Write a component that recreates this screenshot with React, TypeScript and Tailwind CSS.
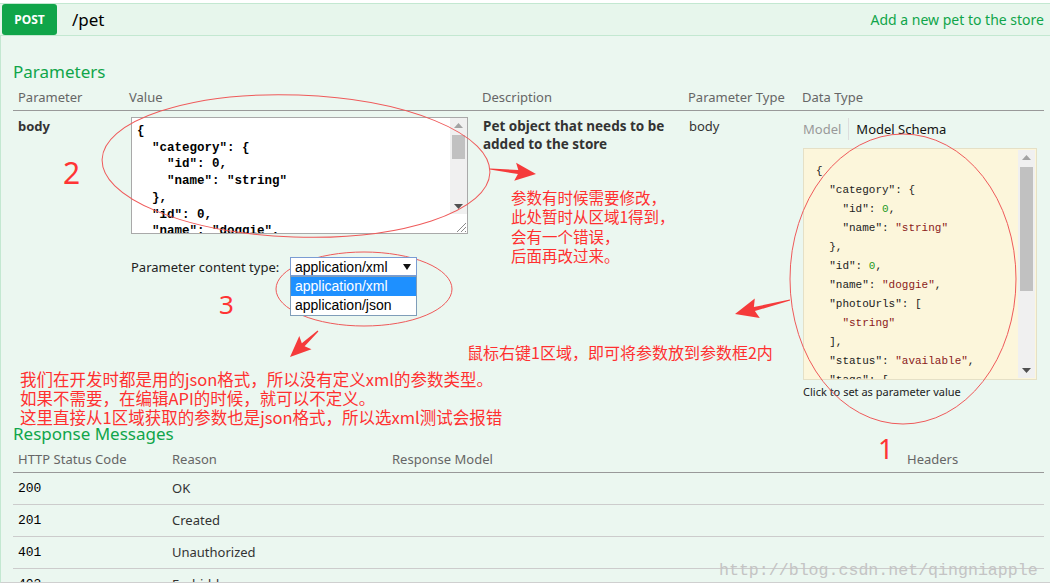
import React from "react";

function arrowPoints(tx: number, ty: number, hx: number, hy: number, headLen: number, headW: number, shaft: number) {
  const dx = hx - tx;
  const dy = hy - ty;
  const L = Math.hypot(dx, dy);
  const ux = dx / L;
  const uy = dy / L;
  const px = -uy;
  const py = ux;
  const bx = hx - ux * headLen;
  const by = hy - uy * headLen;
  const pts: [number, number][] = [
    [tx + px * 0.6, ty + py * 0.6],
    [bx + px * shaft, by + py * shaft],
    [bx - ux * 3 + px * headW / 2, by - uy * 3 + py * headW / 2],
    [hx, hy],
    [bx - ux * 3 - px * headW / 2, by - uy * 3 - py * headW / 2],
    [bx - px * shaft, by - py * shaft],
    [tx - px * 0.6, ty - py * 0.6],
  ];
  return pts.map((p) => `${p[0].toFixed(1)},${p[1].toFixed(1)}`).join(" ");
}

const textareaLines = [
  "{",
  '  "category": {',
  '    "id": 0,',
  '    "name": "string"',
  "  },",
  '  "id": 0,',
  '  "name": "doggie",',
  '  "photoUrls": [',
];

type Tok = { t: string; c?: string };
const K = "text-[#222]";
const S = "text-[#8b1a1a]";
const N = "text-[#1e9a1e]";
const schemaLines: Tok[][] = [
  [{ t: "{" }],
  [{ t: "  " }, { t: '"category"', c: K }, { t: ": {" }],
  [{ t: "    " }, { t: '"id"', c: K }, { t: ": " }, { t: "0", c: N }, { t: "," }],
  [{ t: "    " }, { t: '"name"', c: K }, { t: ": " }, { t: '"string"', c: S }],
  [{ t: "  }," }],
  [{ t: "  " }, { t: '"id"', c: K }, { t: ": " }, { t: "0", c: N }, { t: "," }],
  [{ t: "  " }, { t: '"name"', c: K }, { t: ": " }, { t: '"doggie"', c: S }, { t: "," }],
  [{ t: "  " }, { t: '"photoUrls"', c: K }, { t: ": [" }],
  [{ t: "    " }, { t: '"string"', c: S }],
  [{ t: "  ]," }],
  [{ t: "  " }, { t: '"status"', c: K }, { t: ": " }, { t: '"available"', c: S }, { t: "," }],
  [{ t: "  " }, { t: '"tags"', c: K }, { t: ": [" }],
];

const responses = [
  ["200", "OK"],
  ["201", "Created"],
  ["401", "Unauthorized"],
  ["403", "Forbidden"],
];

function UpArrow() {
  return (
    <svg width="9" height="5" viewBox="0 0 9 5">
      <polygon points="0,5 4.5,0 9,5" fill="#a3a3a3" />
    </svg>
  );
}
function DownArrow({ color = "#505050" }: { color?: string }) {
  return (
    <svg width="9" height="5" viewBox="0 0 9 5">
      <polygon points="0,0 9,0 4.5,5" fill={color} />
    </svg>
  );
}

export default function App() {
  return (
    <div className="relative w-[1050px] h-[584px] overflow-hidden bg-white font-['Noto_Sans',sans-serif]">
      <div className="pt-[3px]">
        {/* heading bar */}
        <div className="flex h-[33px] items-stretch bg-[#e7f6ec] border-y border-[#c3e8d1]">
          <div className="ml-[2px] w-[55px] bg-[#10a54a] rounded-[3px] flex items-center justify-center text-white text-[12px] font-bold">
            POST
          </div>
          <div className="ml-[15px] flex items-center text-[17px] text-black">/pet</div>
          <div className="ml-auto mr-[6px] flex items-center text-[14px] text-[#10a54a]">
            Add a new pet to the store
          </div>
        </div>

        {/* content */}
        <div className="h-[547px] bg-[#ebf7f0] border-l border-b border-l-[#c3e8d1] border-b-[#cfcfcf] pl-[12px] pr-[6px] overflow-hidden">
          <div className="mt-[26px] h-[20px] leading-[20px] text-[17px] text-[#10a54a]">Parameters</div>

          <div className="mt-[4px] grid grid-cols-[111px_353px_206px_114px_247px] h-[25px] items-center border-b border-[#999] text-[13px] text-[#666]">
            <div className="pl-[5px]">Parameter</div>
            <div className="pl-[5px]">Value</div>
            <div className="pl-[5px]">Description</div>
            <div className="pl-[5px]">Parameter Type</div>
            <div className="pl-[5px]">Data Type</div>
          </div>

          <div className="grid grid-cols-[111px_353px_206px_114px_247px] h-[300px] text-[13px] leading-[18px]">
            <div className="pl-[5px] pt-[6px] font-bold text-[#333]">body</div>

            <div className="pl-[7px] pt-[6px]">
              {/* textarea */}
              <div className="flex w-[337px] h-[117px] border border-[#a9a9a9] bg-white">
                <pre className="flex-1 overflow-hidden pl-[5px] pt-[5px] font-['Liberation_Mono',monospace] font-bold text-[12.5px] leading-[16.7px] text-black">
                  {textareaLines.join("\n")}
                </pre>
                <div className="w-[17px] flex flex-col">
                  <div className="flex-1 bg-[#f0f0f0] flex flex-col items-center">
                    <div className="h-[15px] flex items-center justify-center">
                      <UpArrow />
                    </div>
                    <div className="mt-[2px] w-[13px] h-[24px] bg-[#c1c1c1]" />
                    <div className="flex-1" />
                    <div className="h-[15px] flex items-center justify-center">
                      <DownArrow />
                    </div>
                  </div>
                  <div className="h-[19px] bg-white flex items-end justify-end">
                    <svg width="12" height="12" viewBox="0 0 12 12">
                      <line x1="11" y1="2" x2="2" y2="11" stroke="#8a8a8a" strokeWidth="1" />
                      <line x1="11" y1="6" x2="6" y2="11" stroke="#8a8a8a" strokeWidth="1" />
                      <line x1="11" y1="10" x2="10" y2="11" stroke="#8a8a8a" strokeWidth="1" />
                    </svg>
                  </div>
                </div>
              </div>

              {/* content type */}
              <div className="mt-[23px] flex items-center h-[19px]">
                <div className="w-[159px] text-[13px] text-[#222]">Parameter content type:</div>
                <div className="relative z-10">
                  <div className="w-[127px] h-[19px] border border-[#7a9cd3] bg-white flex items-center pl-[4px] pr-[5px] font-['Liberation_Sans',Arial,sans-serif] text-[14px] text-black">
                    <span className="flex-1">application/xml</span>
                    <svg width="8" height="6" viewBox="0 0 8 6">
                      <polygon points="0,0 8,0 4,6" fill="#111" />
                    </svg>
                  </div>
                  <div className="absolute left-0 top-[19px] w-[127px] border border-[#7f9db9] bg-white font-['Liberation_Sans',Arial,sans-serif] text-[14px]">
                    <div className="h-[19px] leading-[19px] pl-[4px] bg-[#1e90ff] text-white">application/xml</div>
                    <div className="h-[19px] leading-[19px] pl-[4px] text-black">application/json</div>
                  </div>
                </div>
              </div>
            </div>

            <div className="pl-[6px] pt-[6px] pr-[4px] font-bold text-[13.5px] text-[#333]">
              Pet object that needs to be added to the store
            </div>

            <div className="pl-[6px] pt-[6px] text-[#333]">body</div>

            <div className="pl-[6px] pt-[7px]">
              <div className="flex h-[22px] items-stretch text-[13px]">
                <div className="pr-[7px] border-r border-[#ddd] flex items-center text-[#999]">Model</div>
                <div className="pl-[7px] flex items-center text-[#111]">Model Schema</div>
              </div>
              <div className="mt-[8px] w-[234px] h-[232px] border border-[#e5e0c6] bg-[#fcf6db] flex">
                <pre className="flex-1 overflow-hidden pl-[12px] pt-[13px] font-['Liberation_Mono',monospace] text-[11px] leading-[19px] text-[#222]">
                  {schemaLines.map((line, i) => (
                    <div key={i}>
                      {line.map((tok, j) => (
                        <span key={j} className={tok.c}>
                          {tok.t}
                        </span>
                      ))}
                    </div>
                  ))}
                </pre>
                <div className="w-[17px] my-[1px] mr-[1px] bg-[#f0f0f0] flex flex-col items-center">
                  <div className="h-[15px] flex items-center justify-center">
                    <UpArrow />
                  </div>
                  <div className="mt-[2px] w-[13px] h-[124px] bg-[#c1c1c1]" />
                  <div className="flex-1" />
                  <div className="h-[15px] flex items-center justify-center">
                    <DownArrow />
                  </div>
                </div>
              </div>
              <div className="mt-[4px] h-[16px] leading-[16px] text-[11px] text-[#222]">Click to set as parameter value</div>
            </div>
          </div>

          <div className="mt-[13px] h-[20px] leading-[20px] text-[17px] text-[#10a54a]">Response Messages</div>

          <div className="mt-[4px] grid grid-cols-[154px_220px_515px_142px] h-[25px] items-center border-b border-[#999] text-[13px] text-[#666]">
            <div className="pl-[5px]">HTTP Status Code</div>
            <div className="pl-[5px]">Reason</div>
            <div className="pl-[5px]">Response Model</div>
            <div className="pl-[5px]">Headers</div>
          </div>
          {responses.map(([code, reason]) => (
            <div
              key={code}
              className="grid grid-cols-[154px_220px_515px_142px] h-[32px] items-center border-b border-[#cccccc] text-[13px] text-[#333]"
            >
              <div className="pl-[5px] font-['Liberation_Mono',monospace] text-black">{code}</div>
              <div className="pl-[5px]">{reason}</div>
              <div />
              <div />
            </div>
          ))}
        </div>
      </div>

      {/* annotation overlay */}
      <svg className="absolute left-0 top-0 pointer-events-none" width="1050" height="584" viewBox="0 0 1050 584">
        <ellipse cx="296" cy="166" rx="194" ry="71" fill="none" stroke="#ef5a5a" strokeWidth="1" transform="rotate(2 296 166)" />
        <ellipse cx="903" cy="279" rx="113" ry="145" fill="none" stroke="#ef5a5a" strokeWidth="1" />
        <ellipse cx="364" cy="289" rx="88" ry="37" fill="none" stroke="#ef5a5a" strokeWidth="1" />
        <polygon points={arrowPoints(490, 169, 536, 174, 18, 18, 2)} fill="#f53b3b" />
        <polygon points={arrowPoints(790, 300, 735, 314, 20, 20, 2)} fill="#f53b3b" />
        <polygon points={arrowPoints(318, 331, 290, 357, 18, 18, 2)} fill="#f53b3b" />
      </svg>

      <div className="absolute left-[63px] top-[158px] text-[30px] leading-[30px] text-[#ff3434] pointer-events-none">2</div>
      <div className="absolute left-[219px] top-[291px] text-[26px] leading-[26px] text-[#ff3434] pointer-events-none">3</div>
      <div className="absolute left-[878px] top-[435px] text-[27px] leading-[27px] text-[#ff3434] pointer-events-none">1</div>

      <div className="absolute left-[511px] top-[188px] font-['Noto_Sans_CJK_SC',sans-serif] text-[15.5px] leading-[19.3px] text-[#ff3030] pointer-events-none whitespace-nowrap">
        <div>参数有时候需要修改，</div>
        <div>此处暂时从区域1得到，</div>
        <div>会有一个错误，</div>
        <div>后面再改过来。</div>
      </div>
      <div className="absolute left-[467px] top-[342px] font-['Noto_Sans_CJK_SC',sans-serif] text-[16px] leading-[20px] text-[#ff3030] pointer-events-none whitespace-nowrap">
        鼠标右键1区域，即可将参数放到参数框2内
      </div>
      <div className="absolute left-[20px] top-[370px] font-['Noto_Sans_CJK_SC',sans-serif] text-[16.5px] leading-[19px] text-[#ff3030] pointer-events-none whitespace-nowrap">
        <div>我们在开发时都是用的json格式，所以没有定义xml的参数类型。</div>
        <div>如果不需要，在编辑API的时候，就可以不定义。</div>
        <div>这里直接从1区域获取的参数也是json格式，所以选xml测试会报错</div>
      </div>

      <div className="absolute left-[719px] top-[561px] font-['Liberation_Mono',monospace] text-[16.6px] leading-[20px] text-[#c4c4c4] pointer-events-none whitespace-nowrap">
        http://blog.csdn.net/qingniapple
      </div>
    </div>
  );
}
